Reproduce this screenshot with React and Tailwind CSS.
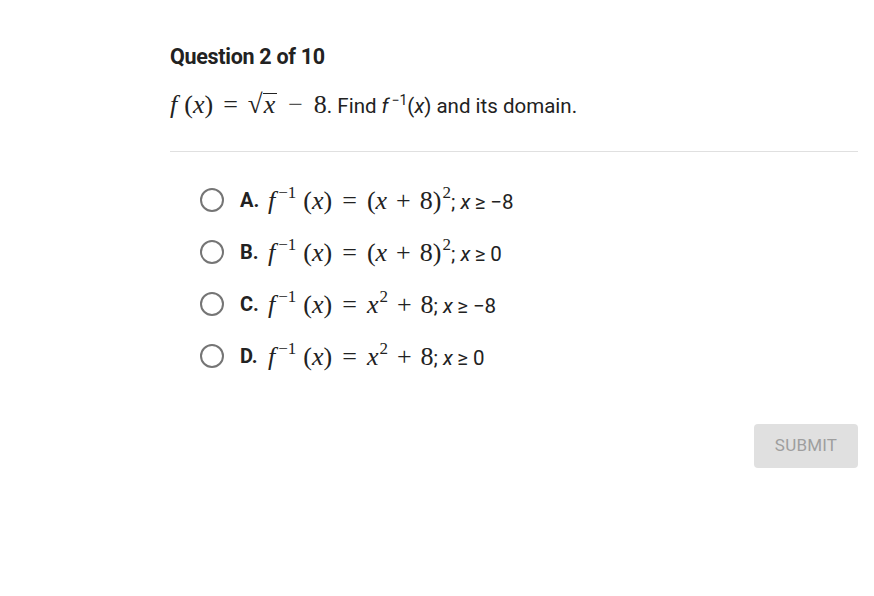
import React from "react";

function Mth({ children }) {
  return (
    <span className="font-['Liberation_Serif',serif] text-[26px] text-[#222]">{children}</span>
  );
}

function Sup({ children, className = "" }) {
  return (
    <span className={"relative -top-[11px] text-[17px] inline-block " + className}>{children}</span>
  );
}

function Finv() {
  return (
    <>
      <span className="italic">f</span>
      <Sup className="ml-[3px]">−1</Sup>
      <span className="ml-[7px]">(</span>
      <span className="italic">x</span>
      <span>)</span>
      <span className="mx-[10px]">=</span>
    </>
  );
}

function Radio() {
  return (
    <span className="w-[24px] h-[24px] rounded-full border-2 border-[#757575] bg-white shrink-0" />
  );
}

function Option({ letter, math, domain }) {
  return (
    <div className="flex items-center h-[52px]">
      <Radio />
      <span className="ml-[16px] font-bold text-[20px] text-[#222] w-[21px]">{letter}</span>
      <span className="ml-[7px] flex items-baseline">
        <Mth>
          <Finv />
          {math}
        </Mth>
        <span className="text-[20.5px] text-[#222]">; <span className="italic">x</span>{"\u2009≥ " + domain}</span>
      </span>
    </div>
  );
}

const sq = (
  <>
    <span>(</span>
    <span className="italic">x</span>
    <span className="mx-[9px]">+</span>
    <span>8)</span>
    <Sup className="ml-[1px]">2</Sup>
  </>
);
const lin = (
  <>
    <span className="italic">x</span>
    <Sup className="ml-[1px]">2</Sup>
    <span className="mx-[9px]">+</span>
    <span>8</span>
  </>
);

export default function App() {
  return (
    <div className="w-[874px] h-[596px] bg-white font-['Roboto',sans-serif] text-[#222]">
      <div className="pl-[170px] pr-[16px] pt-[43px]">
        <div className="text-[21.5px] font-bold leading-[28px] tracking-[-0.3px]">Question 2 of 10</div>
        <div className="mt-[17px] h-[32px] flex items-baseline text-[20.5px] leading-[32px]">
          <Mth>
            <span className="italic">f</span>
            <span className="ml-[7px]">(</span>
            <span className="italic">x</span>
            <span>)</span>
            <span className="mx-[10px]">=</span>
            <span className="inline-flex items-baseline">
              <span className="text-[27px]">√</span>
              <span className="italic border-t border-[#222] leading-[22px] pl-[1px] pr-[2px]">x</span>
            </span>
            <span className="mx-[11px] text-[#555]">−</span>
            <span>8</span>
          </Mth>
          <span>. Find </span>
          <span className="ml-[5px] italic">f</span>
          <span className="relative -top-[8px] text-[14px] inline-block ml-[3px]">−1</span>
          <span>(<span className="italic">x</span>) and its domain.</span>
        </div>
        <div className="mt-[31px] h-px bg-[#e0e0e0]" />
        <div className="pl-[30px] pt-[22px]">
          <Option letter="A." domain="−8" math={sq} />
          <Option letter="B." domain="0" math={sq} />
          <Option letter="C." domain="−8" math={lin} />
          <Option letter="D." domain="0" math={lin} />
        </div>
        <div className="flex justify-end mt-[42px]">
          <button className="w-[104px] h-[44px] rounded-[4px] bg-[#e0e0e0] text-[#9e9e9e] text-[17px] tracking-[0.2px]">
            SUBMIT
          </button>
        </div>
      </div>
    </div>
  );
}
